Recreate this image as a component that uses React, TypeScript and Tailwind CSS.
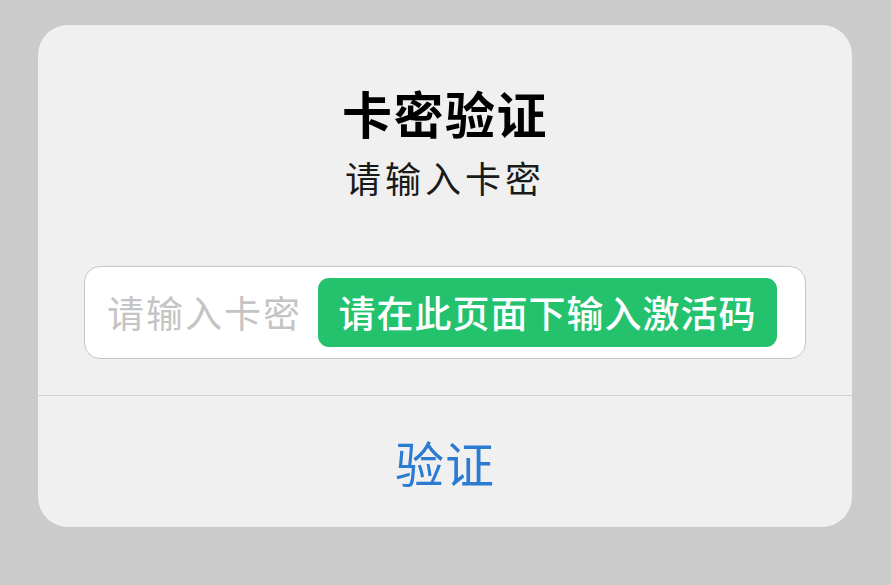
export default function App() {
  return (
    <div
      className="h-[585px] w-[891px] bg-[#cbcbcb] pt-[25px] pl-[38px]"
      style={{ fontFamily: '"Noto Sans CJK SC", "Noto Sans", sans-serif' }}
    >
      <div className="flex h-[502px] w-[814px] flex-col rounded-[30px] bg-[#f0f0f0]">
        <div className="flex flex-col items-center pt-[62px]">
          <h1 className="text-[50px] font-bold leading-none tracking-[1.5px] text-black">卡密验证</h1>
          <p className="mt-[22px] text-[36px] leading-none tracking-[4px] text-[#1a1a1a]">请输入卡密</p>
        </div>

        <div className="mx-[46px] mt-[71px] flex h-[93px] items-center rounded-[16px] border border-[#c6c6c6] bg-white pl-[22px] pr-[28px]">
          <span className="flex-1 text-[37px] leading-none tracking-[2px] text-[#c4c4c4]">请输入卡密</span>
          <span className="flex h-[69px] w-[459px] items-center justify-center rounded-[11px] bg-[#25c26e] text-[37px] font-medium leading-none tracking-[1px] text-white">
            请在此页面下输入激活码
          </span>
        </div>

        <div className="mt-[36px] border-t border-[#d2d2d2]" />

        <button className="flex flex-1 items-center justify-center text-[49px] leading-none tracking-[1px] text-[#2c7bd2]">
          验证
        </button>
      </div>
    </div>
  );
}
